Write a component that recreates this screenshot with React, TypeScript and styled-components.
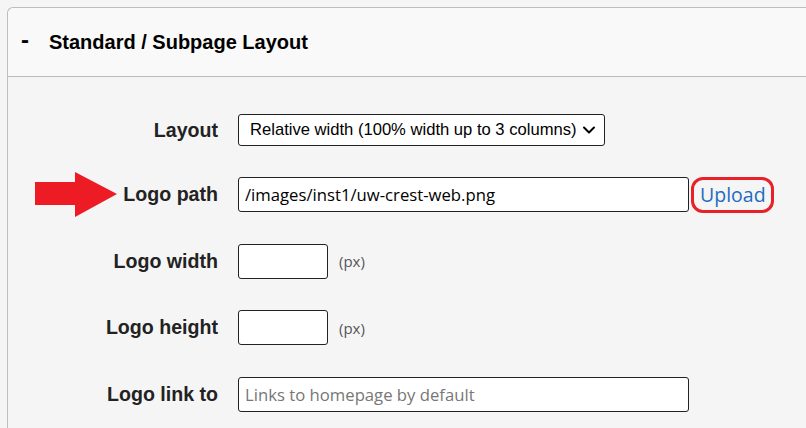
import React from 'react';
import styled, { createGlobalStyle } from 'styled-components';

const GlobalStyle = createGlobalStyle`
  html, body {
    margin: 0;
    padding: 0;
    background: #f5f5f5;
    overflow: hidden;
  }
  body {
    font-family: 'Liberation Sans', Arial, sans-serif;
  }
`;

const Page = styled.div`
  width: 806px;
  height: 428px;
  padding: 7px 0 0 7px;
  box-sizing: border-box;
  overflow: hidden;
`;

const Panel = styled.section`
  width: 830px;
  height: 460px;
  border: 1px solid #bdbdbd;
  border-right: none;
  border-radius: 6px 0 0 0;
  background: #f5f5f5;
`;

const PanelHeader = styled.header`
  height: 68px;
  display: flex;
  align-items: center;
  padding-left: 13px;
  background: #f9f9f9;
  border-bottom: 1px solid #bdbdbd;
  border-radius: 6px 0 0 0;
`;

const Toggle = styled.span`
  font-size: 24px;
  font-weight: bold;
  color: #000;
  width: 28px;
  margin-top: -4px;
`;

const Title = styled.h2`
  margin: 0;
  font-size: 20px;
  font-weight: bold;
  color: #000;
`;

const Body = styled.div`
  display: grid;
  grid-template-columns: 210px 1fr;
  column-gap: 20px;
  padding-top: 37px;
`;

const Label = styled.label<{ $first?: boolean }>`
  display: flex;
  align-items: center;
  justify-content: flex-end;
  height: ${p => (p.$first ? 32 : 35)}px;
  margin-bottom: ${p => (p.$first ? 31 : 31.5)}px;
  font-size: 19.6px;
  font-weight: bold;
  color: #222;
  position: relative;
`;

const Field = styled.div<{ $first?: boolean }>`
  display: flex;
  align-items: center;
  height: ${p => (p.$first ? 32 : 35)}px;
  margin-bottom: ${p => (p.$first ? 31 : 31.5)}px;
  gap: 11px;
`;

const Select = styled.div`
  width: 367px;
  height: 32px;
  box-sizing: border-box;
  border: 1px solid #222;
  border-radius: 3px;
  background: #fff;
  display: flex;
  align-items: center;
  justify-content: space-between;
  padding: 0 8px 0 11px;
  font-size: 16.6px;
  color: #000;
  white-space: nowrap;
`;

const TextInput = styled.div<{ $width: number; $placeholder?: boolean }>`
  width: ${p => p.$width}px;
  height: 35px;
  box-sizing: border-box;
  border: 1px solid #222;
  border-radius: 3px;
  background: #fff;
  display: flex;
  align-items: center;
  padding: 0 6px;
  font-family: 'Open Sans', 'Noto Sans', sans-serif;
  font-size: 16.7px;
  color: ${p => (p.$placeholder ? '#777' : '#000')};
  white-space: nowrap;
`;

const Unit = styled.span`
  font-family: 'Open Sans', 'Noto Sans', sans-serif;
  font-size: 15px;
  color: #555;
`;

const UploadLink = styled.a`
  margin-left: -9px;
  height: 36px;
  box-sizing: border-box;
  display: flex;
  align-items: center;
  padding: 0 5px 0 6px;
  border: 3px solid #e8202a;
  border-radius: 12px;
  font-family: 'Open Sans', 'Noto Sans', sans-serif;
  font-size: 19.5px;
  color: #1e6bc0;
  text-decoration: none;
`;

const Arrow = styled.svg`
  position: absolute;
  left: 27px;
  top: -5px;
`;

const Chevron = () => (
  <svg width="14" height="14" viewBox="0 0 14 14">
    <path d="M2 4.5 L7 9.5 L12 4.5" fill="none" stroke="#000" strokeWidth="2" strokeLinecap="round" strokeLinejoin="round" />
  </svg>
);

export default function App() {
  return (
    <Page>
      <GlobalStyle />
      <Panel>
        <PanelHeader>
          <Toggle>-</Toggle>
          <Title>Standard / Subpage Layout</Title>
        </PanelHeader>
        <Body>
          <Label $first>Layout</Label>
          <Field $first>
            <Select>
              <span>Relative width (100% width up to 3 columns)</span>
              <Chevron />
            </Select>
          </Field>

          <Label>
            <Arrow width="82" height="46" viewBox="0 0 82 46">
              <polygon points="0,10 40,10 40,0 82,22 40,45 40,33 0,33" fill="#ed1c24" />
            </Arrow>
            Logo path
          </Label>
          <Field>
            <TextInput $width={451}>/images/inst1/uw-crest-web.png</TextInput>
            <UploadLink href="#">Upload</UploadLink>
          </Field>

          <Label>Logo width</Label>
          <Field>
            <TextInput $width={90} />
            <Unit>(px)</Unit>
          </Field>

          <Label>Logo height</Label>
          <Field>
            <TextInput $width={90} />
            <Unit>(px)</Unit>
          </Field>

          <Label>Logo link to</Label>
          <Field>
            <TextInput $width={451} $placeholder>Links to homepage by default</TextInput>
          </Field>
        </Body>
      </Panel>
    </Page>
  );
}
